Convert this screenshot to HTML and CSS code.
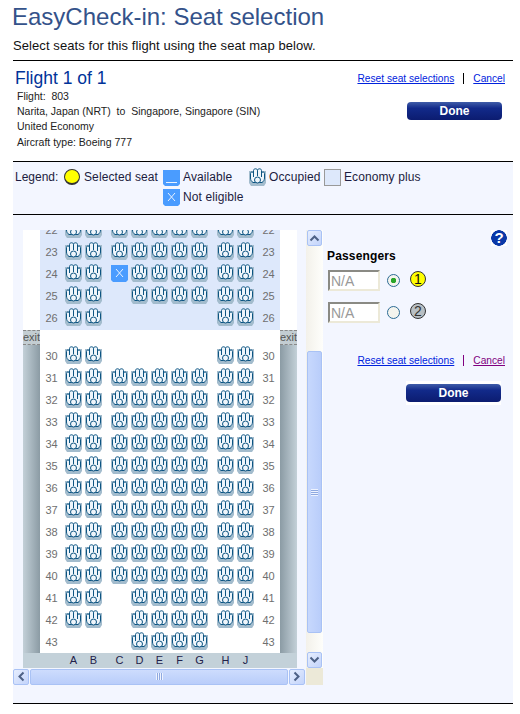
FILE: index.html
```html
<!DOCTYPE html>
<html lang="en">
<head>
    <meta charset="UTF-8">
    <title>EasyCheck-in: Seat selection</title>
    <link rel="stylesheet" href="styles.css">
</head>
<body>
<div class="page">
    <header class="top">
        <h1>EasyCheck-in: Seat selection</h1>
        <p>Select seats for this flight using the seat map below.</p>
    </header>

    <!-- Flight details -->
    <section class="flight">
        <div class="flight-info">
            <h2>Flight 1 of 1</h2>
            <ul>
                <li>Flight:&nbsp; 803</li>
                <li>Narita, Japan (NRT)&nbsp; to&nbsp; Singapore, Singapore (SIN)</li>
                <li>United Economy</li>
                <li>Aircraft type: Boeing 777</li>
            </ul>
        </div>
        <div class="flight-actions">
            <div class="links">
                <a href="#">Reset seat selections</a><span class="sep"></span><a href="#">Cancel</a>
            </div>
            <button class="done" type="button">Done</button>
        </div>
    </section>

    <!-- Legend -->
    <section class="legend">
        <div class="legend-row">
            <span class="legend-title">Legend:</span>
            <span class="dot"></span><span class="label l-selected">Selected seat</span>
            <i class="seat open"></i><span class="label l-available">Available</span>
            <i class="seat"></i><span class="label l-occupied">Occupied</span>
            <span class="swatch"></span><span class="label">Economy plus</span>
        </div>
        <div class="legend-row second">
            <i class="seat blocked"></i><span class="label">Not eligible</span>
        </div>
    </section>

    <main class="main">
        <div class="scroller">
            <div class="view">
                <div class="map">
                    <div class="plus">
                        <div class="row"><span class="num">22</span><i class="seat"></i><i class="seat"></i><i class="seat"></i><i class="seat"></i><i class="seat"></i><i class="seat"></i><i class="seat"></i><i class="seat"></i><i class="seat"></i><span class="num">22</span></div>
                        <div class="row"><span class="num">23</span><i class="seat"></i><i class="seat"></i><i class="seat"></i><i class="seat"></i><i class="seat"></i><i class="seat"></i><i class="seat"></i><i class="seat"></i><i class="seat"></i><span class="num">23</span></div>
                        <div class="row"><span class="num">24</span><i class="seat"></i><i class="seat"></i><i class="seat blocked"></i><i class="seat"></i><i class="seat"></i><i class="seat"></i><i class="seat"></i><i class="seat"></i><i class="seat"></i><span class="num">24</span></div>
                        <div class="row"><span class="num">25</span><i class="seat"></i><i class="seat"></i><i class="seat none"></i><i class="seat"></i><i class="seat"></i><i class="seat"></i><i class="seat"></i><i class="seat"></i><i class="seat"></i><span class="num">25</span></div>
                        <div class="row"><span class="num">26</span><i class="seat"></i><i class="seat"></i><i class="seat none"></i><i class="seat none"></i><i class="seat none"></i><i class="seat none"></i><i class="seat none"></i><i class="seat"></i><i class="seat"></i><span class="num">26</span></div>
                    </div>
                    <div class="cabin">
                        <div class="side left"><div class="exit">exit</div></div>
                        <div class="rows">
                            <div class="row"><span class="num">30</span><i class="seat"></i><i class="seat"></i><i class="seat none"></i><i class="seat none"></i><i class="seat none"></i><i class="seat none"></i><i class="seat none"></i><i class="seat"></i><i class="seat"></i><span class="num">30</span></div>
                            <div class="row"><span class="num">31</span><i class="seat"></i><i class="seat"></i><i class="seat"></i><i class="seat"></i><i class="seat"></i><i class="seat"></i><i class="seat"></i><i class="seat"></i><i class="seat"></i><span class="num">31</span></div>
                            <div class="row"><span class="num">32</span><i class="seat"></i><i class="seat"></i><i class="seat"></i><i class="seat"></i><i class="seat"></i><i class="seat"></i><i class="seat"></i><i class="seat"></i><i class="seat"></i><span class="num">32</span></div>
                            <div class="row"><span class="num">33</span><i class="seat"></i><i class="seat"></i><i class="seat"></i><i class="seat"></i><i class="seat"></i><i class="seat"></i><i class="seat"></i><i class="seat"></i><i class="seat"></i><span class="num">33</span></div>
                            <div class="row"><span class="num">34</span><i class="seat"></i><i class="seat"></i><i class="seat"></i><i class="seat"></i><i class="seat"></i><i class="seat"></i><i class="seat"></i><i class="seat"></i><i class="seat"></i><span class="num">34</span></div>
                            <div class="row"><span class="num">35</span><i class="seat"></i><i class="seat"></i><i class="seat"></i><i class="seat"></i><i class="seat"></i><i class="seat"></i><i class="seat"></i><i class="seat"></i><i class="seat"></i><span class="num">35</span></div>
                            <div class="row"><span class="num">36</span><i class="seat"></i><i class="seat"></i><i class="seat"></i><i class="seat"></i><i class="seat"></i><i class="seat"></i><i class="seat"></i><i class="seat"></i><i class="seat"></i><span class="num">36</span></div>
                            <div class="row"><span class="num">37</span><i class="seat"></i><i class="seat"></i><i class="seat"></i><i class="seat"></i><i class="seat"></i><i class="seat"></i><i class="seat"></i><i class="seat"></i><i class="seat"></i><span class="num">37</span></div>
                            <div class="row"><span class="num">38</span><i class="seat"></i><i class="seat"></i><i class="seat"></i><i class="seat"></i><i class="seat"></i><i class="seat"></i><i class="seat"></i><i class="seat"></i><i class="seat"></i><span class="num">38</span></div>
                            <div class="row"><span class="num">39</span><i class="seat"></i><i class="seat"></i><i class="seat"></i><i class="seat"></i><i class="seat"></i><i class="seat"></i><i class="seat"></i><i class="seat"></i><i class="seat"></i><span class="num">39</span></div>
                            <div class="row"><span class="num">40</span><i class="seat"></i><i class="seat"></i><i class="seat"></i><i class="seat"></i><i class="seat"></i><i class="seat"></i><i class="seat"></i><i class="seat"></i><i class="seat"></i><span class="num">40</span></div>
                            <div class="row"><span class="num">41</span><i class="seat"></i><i class="seat"></i><i class="seat none"></i><i class="seat"></i><i class="seat"></i><i class="seat"></i><i class="seat"></i><i class="seat"></i><i class="seat"></i><span class="num">41</span></div>
                            <div class="row"><span class="num">42</span><i class="seat"></i><i class="seat"></i><i class="seat none"></i><i class="seat"></i><i class="seat"></i><i class="seat"></i><i class="seat"></i><i class="seat"></i><i class="seat"></i><span class="num">42</span></div>
                            <div class="row"><span class="num">43</span><i class="seat none"></i><i class="seat none"></i><i class="seat none"></i><i class="seat"></i><i class="seat"></i><i class="seat"></i><i class="seat"></i><i class="seat none"></i><i class="seat none"></i><span class="num">43</span></div>
                        </div>
                        <div class="side right"><div class="exit">exit</div></div>
                    </div>
                    <div class="row letters"><span class="num"></span><b>A</b><b>B</b><b>C</b><b>D</b><b>E</b><b>F</b><b>G</b><b>H</b><b>J</b></div>
                </div>
            </div>

            <div class="vbar">
                <span class="sbtn"><svg width="11" height="8" viewBox="0 0 11 8"><path d="M1.500 6.500 5.500 2.500 9.500 6.500" fill="none" stroke="#4d6185" stroke-width="2"/></svg></span>
                <div class="vtrack"><div class="vthumb"><span class="grip-h"></span></div></div>
                <span class="sbtn"><svg width="11" height="8" viewBox="0 0 11 8"><path d="M1.500 1.500 5.500 5.500 9.500 1.500" fill="none" stroke="#4d6185" stroke-width="2"/></svg></span>
            </div>
            <div class="hbar">
                <span class="sbtn"><svg width="8" height="11" viewBox="0 0 8 11"><path d="M6.500 1.500 2.500 5.500 6.500 9.500" fill="none" stroke="#4d6185" stroke-width="2"/></svg></span>
                <div class="hthumb"><span class="grip-v"></span></div>
                <span class="sbtn"><svg width="8" height="11" viewBox="0 0 8 11"><path d="M1.500 1.500 5.500 5.500 1.500 9.500" fill="none" stroke="#4d6185" stroke-width="2"/></svg></span>
            </div>
            <div class="corner"></div>
        </div>

        <!-- Passengers -->
        <aside class="passengers">
            <div class="help">?</div>
            <h3>Passengers</h3>
            <div class="pax">
                <input class="pax-seat" type="text" value="N/A" readonly>
                <input class="pax-radio" type="radio" name="pax" checked>
                <span class="badge active">1</span>
            </div>
            <div class="pax">
                <input class="pax-seat" type="text" value="N/A" readonly>
                <input class="pax-radio" type="radio" name="pax">
                <span class="badge">2</span>
            </div>
            <div class="links lower">
                <a href="#">Reset seat selections</a><span class="sep visited"></span><a class="visited" href="#">Cancel</a>
            </div>
            <div class="done-wrap"><button class="done" type="button">Done</button></div>
        </aside>
    </main>
</div>
</body>
</html>
```

FILE: styles.css
```css
body {
    margin: 0;
    background: #fff;
    font-family: "Liberation Sans", Arial, sans-serif;
    font-size: 12px;
    color: #000;
}
.page {
    width: 500px;
    margin-left: 13px;
}

/* Header */
.top {
    height: 60px;
    border-bottom: 1px solid #000;
}
.top h1 {
    margin: 0 0 0 -1px;
    padding-top: 3px;
    font-size: 24px;
    line-height: 28px;
    font-weight: normal;
    color: #34528a;
}
.top p {
    margin: 7px 0 0;
    font-size: 13px;
    line-height: 15px;
    letter-spacing: 0.08px;
    color: #111;
}

/* Flight */
.flight {
    display: flex;
    justify-content: space-between;
    height: 100px;
    border-bottom: 1px solid #000;
}
.flight-info {
    padding: 6px 0 0 2px;
}
.flight-info h2 {
    margin: 0;
    font-size: 17.500px;
    line-height: 22px;
    font-weight: normal;
    color: #003399;
}
.flight-info ul {
    margin: 0 0 0 2px;
    padding: 0;
    list-style: none;
    font-size: 10.500px;
    line-height: 15.200px;
    color: #222;
}
.flight-actions {
    display: flex;
    flex-direction: column;
    align-items: flex-end;
    padding: 10px 8px 0 0;
}
.links {
    display: flex;
    align-items: center;
    height: 14px;
    font-size: 10.200px;
}
.links a {
    color: #0022dd;
}
.links a.visited {
    color: #800080;
}
.sep {
    width: 1px;
    height: 11px;
    margin: 0 9px;
    background: #000;
}
.sep.visited {
    background: #800080;
}
.done {
    display: block;
    width: 95px;
    height: 18px;
    padding: 0;
    border: 0;
    border-radius: 4px;
    background: linear-gradient(#3f5ca8, #122a8a 35%, #0c1c70);
    font-family: inherit;
    font-size: 12px;
    font-weight: bold;
    color: #fff;
}
.flight-actions .done {
    margin: 17px 3px 0 0;
}

/* Legend */
.legend {
    height: 53px;
    padding-top: 6px;
    box-sizing: border-box;
    background: #f3f6ff;
    border-bottom: 1px solid #000;
    color: #1c1c40;
}
.legend-row {
    display: flex;
    align-items: center;
    height: 18px;
}
.legend-row.second {
    margin: 2px 0 0 150px;
}
.legend-title {
    width: 51px;
    padding-left: 2px;
    box-sizing: border-box;
}
.legend .seat {
    margin-right: 3px;
}
.dot {
    width: 16px;
    height: 16px;
    margin-right: 4px;
    box-sizing: border-box;
    border: 1px solid #333;
    border-bottom-width: 2px;
    border-radius: 50%;
    background: #ffff00;
}
.label {
    white-space: nowrap;
    letter-spacing: 0.1px;
}
.l-selected {
    width: 79px;
}
.l-available {
    width: 66px;
}
.l-occupied {
    width: 55px;
}
.swatch {
    width: 17px;
    height: 17px;
    margin-right: 3px;
    box-sizing: border-box;
    border: 1px solid #999;
    background: #dde8fb;
}

/* Seats */
.seat {
    display: block;
    flex: none;
    width: 17px;
    height: 18px;
    background: url("data:image/svg+xml,%3Csvg xmlns='http://www.w3.org/2000/svg' width='17' height='18'%3E%3Cpath d='M0 3h17v12l-2 3H2l-2-3z' fill='%23a3bccd'/%3E%3Cpath d='M4 14.500C2.500 13.500 1.500 12 1.500 10V5.500C1.500 3.500 4 3.500 4.500 5V2.500C4.500 .2 8.500 .2 8.500 2.500C8.500 .2 12.500 .2 12.500 2.500V5C13 3.500 15.500 3.500 15.500 5.500V10C15.500 12 14.500 13.500 13 14.500z' fill='%23eef5fb' stroke='%230c5482'/%3E%3Cpath d='M4.500 5V9M8.500 2.500V8M12.500 5V9' fill='none' stroke='%230c5482'/%3E%3Ccircle cx='8.500' cy='12' r='3' fill='%23eef5fb' stroke='%230c5482'/%3E%3C/svg%3E") no-repeat;
}
.seat.none {
    background: none;
}
.seat.open {
    background: url("data:image/svg+xml,%3Csvg xmlns='http://www.w3.org/2000/svg' width='17' height='18'%3E%3Cpath d='M0 2h17v14l-2 2H2l-2-2z' fill='%234a9cff'/%3E%3Cpath d='M3 14.500h11' stroke='%23e8f2ff'/%3E%3C/svg%3E") no-repeat;
}
.seat.blocked {
    background: url("data:image/svg+xml,%3Csvg xmlns='http://www.w3.org/2000/svg' width='17' height='18'%3E%3Cpath d='M0 1h17v15l-2 2H2l-2-2z' fill='%234a9cff'/%3E%3Cpath d='M5 5l7 8M12 5l-7 8' stroke='%23e8f2ff'/%3E%3C/svg%3E") no-repeat;
}

/* Main area */
.main {
    display: flex;
    height: 489px;
    box-sizing: border-box;
    background: #f3f6ff;
    border-bottom: 1px solid #000;
}
.scroller {
    display: grid;
    grid-template-columns: 293px 17px;
    grid-template-rows: 438px 17px;
    width: 310px;
    margin-top: 15px;
}
.view {
    overflow: hidden;
    padding-left: 10px;
}
.map {
    width: 274px;
    background: #fff;
}
.plus {
    margin: -10px 17px 0;
    background: #dde8fb;
}
.row {
    display: flex;
    gap: 3px;
    height: 22px;
}
.row > :nth-child(4),
.row > :nth-child(9) {
    margin-left: 6px;
}
.num {
    flex: none;
    width: 22px;
    font-size: 11px;
    line-height: 20px;
    text-align: center;
    color: #6f6f6f;
    padding-left: 1px;
    box-sizing: border-box;
}
.cabin {
    display: flex;
    height: 323px;
    overflow: hidden;
}
.rows {
    width: 240px;
    padding-top: 16px;
}
.side {
    width: 17px;
}
.side.left {
    background: linear-gradient(to right, #c3d0d8, #8b9ba4);
}
.side.right {
    background: linear-gradient(to right, #8b9ba4, #c3d0d8);
}
.exit {
    height: 15px;
    box-sizing: border-box;
    border-top: 1px dashed #888;
    border-bottom: 1px dashed #888;
    background: #c3cdd2;
    overflow: hidden;
    font-size: 11px;
    line-height: 13px;
    color: #555;
}
.letters {
    height: 15px;
    padding-left: 17px;
    background: #c3d1d9;
    line-height: 15px;
}
.letters b {
    flex: none;
    width: 17px;
    font-size: 11px;
    font-weight: normal;
    text-align: center;
    color: #22224a;
}

/* Scrollbars */
.sbtn {
    display: flex;
    align-items: center;
    justify-content: center;
    flex: none;
    width: 15px;
    height: 16px;
    box-sizing: border-box;
    border: 1px solid #a9c2f5;
    border-radius: 2px;
    background: linear-gradient(135deg, #e6eefe, #c3d4fb);
}
.vbar {
    display: flex;
    flex-direction: column;
    align-items: center;
    background: linear-gradient(to right, #f3f1ea, #fefefb);
}
.vtrack {
    flex: 1;
}
.vthumb {
    display: flex;
    align-items: center;
    justify-content: center;
    width: 15px;
    height: 282px;
    margin-top: 105px;
    box-sizing: border-box;
    border: 1px solid #a9c2f5;
    border-radius: 2px;
    background: linear-gradient(to right, #c7d8fd, #b9cdfa);
}
.grip-h {
    width: 7px;
    height: 7px;
    background: repeating-linear-gradient(#eef3ff 0 1px, #8fa9e0 1px 2px);
}
.hbar {
    display: flex;
    align-items: center;
    gap: 1px;
}
.hbar .sbtn {
    width: 16px;
    height: 16px;
}
.hthumb {
    display: flex;
    align-items: center;
    justify-content: center;
    width: 258px;
    height: 16px;
    box-sizing: border-box;
    border: 1px solid #a9c2f5;
    border-radius: 2px;
    background: linear-gradient(#cddcfd, #b9cdfa);
}
.grip-v {
    width: 7px;
    height: 7px;
    background: repeating-linear-gradient(to right, #eef3ff 0 1px, #8fa9e0 1px 2px);
}
.corner {
    background: #ece9d8;
}

/* Passengers */
.passengers {
    flex: 1;
    padding: 15px 0 0 4px;
}
.help {
    width: 16px;
    height: 16px;
    margin-left: 164px;
    background: radial-gradient(circle, #0a38a8 7.500px, #fff 8px);
    font-size: 15px;
    font-weight: bold;
    line-height: 16px;
    text-align: center;
    color: #fff;
}
.passengers h3 {
    margin: 3px 0 0;
    font-size: 12px;
    line-height: 15px;
    letter-spacing: 0.15px;
    font-weight: bold;
    color: #000;
}
.pax {
    display: flex;
    align-items: center;
    margin-top: 6px;
    margin-bottom: 11px;
}
.pax + .pax {
    margin-top: 0;
}
.pax-seat {
    width: 52px;
    height: 21px;
    margin: 0 0 0 1px;
    padding: 0 0 0 1px;
    box-sizing: border-box;
    border: 2px solid #8a8a84;
    border-right-color: #ece9d8;
    border-bottom-color: #ece9d8;
    background: #fff;
    font-family: inherit;
    font-size: 14px;
    color: #999;
}
.pax-radio {
    appearance: none;
    width: 13px;
    height: 13px;
    margin: 0 0 0 7px;
    box-sizing: border-box;
    border: 1px solid #2b6a94;
    border-radius: 50%;
    background: #f4f4ee;
}
.pax-radio:checked {
    background: radial-gradient(circle, #2aa52a 0 2.500px, #f4f4ee 3px);
}
.badge {
    align-self: flex-start;
    width: 16px;
    height: 16px;
    margin: 1px 0 0 10px;
    box-sizing: border-box;
    border: 1px solid #333;
    border-radius: 50%;
    background: #b7bfc4;
    font-size: 14px;
    line-height: 14px;
    text-align: center;
    color: #333;
}
.badge.active {
    background: #ffff00;
    color: #111;
}
.links.lower {
    justify-content: flex-end;
    margin: 30px 8px 0 0;
}
.done-wrap {
    width: 95px;
    margin: 14px 0 0 79px;
    padding: 3px 0;
    background: #fff;
}
```
